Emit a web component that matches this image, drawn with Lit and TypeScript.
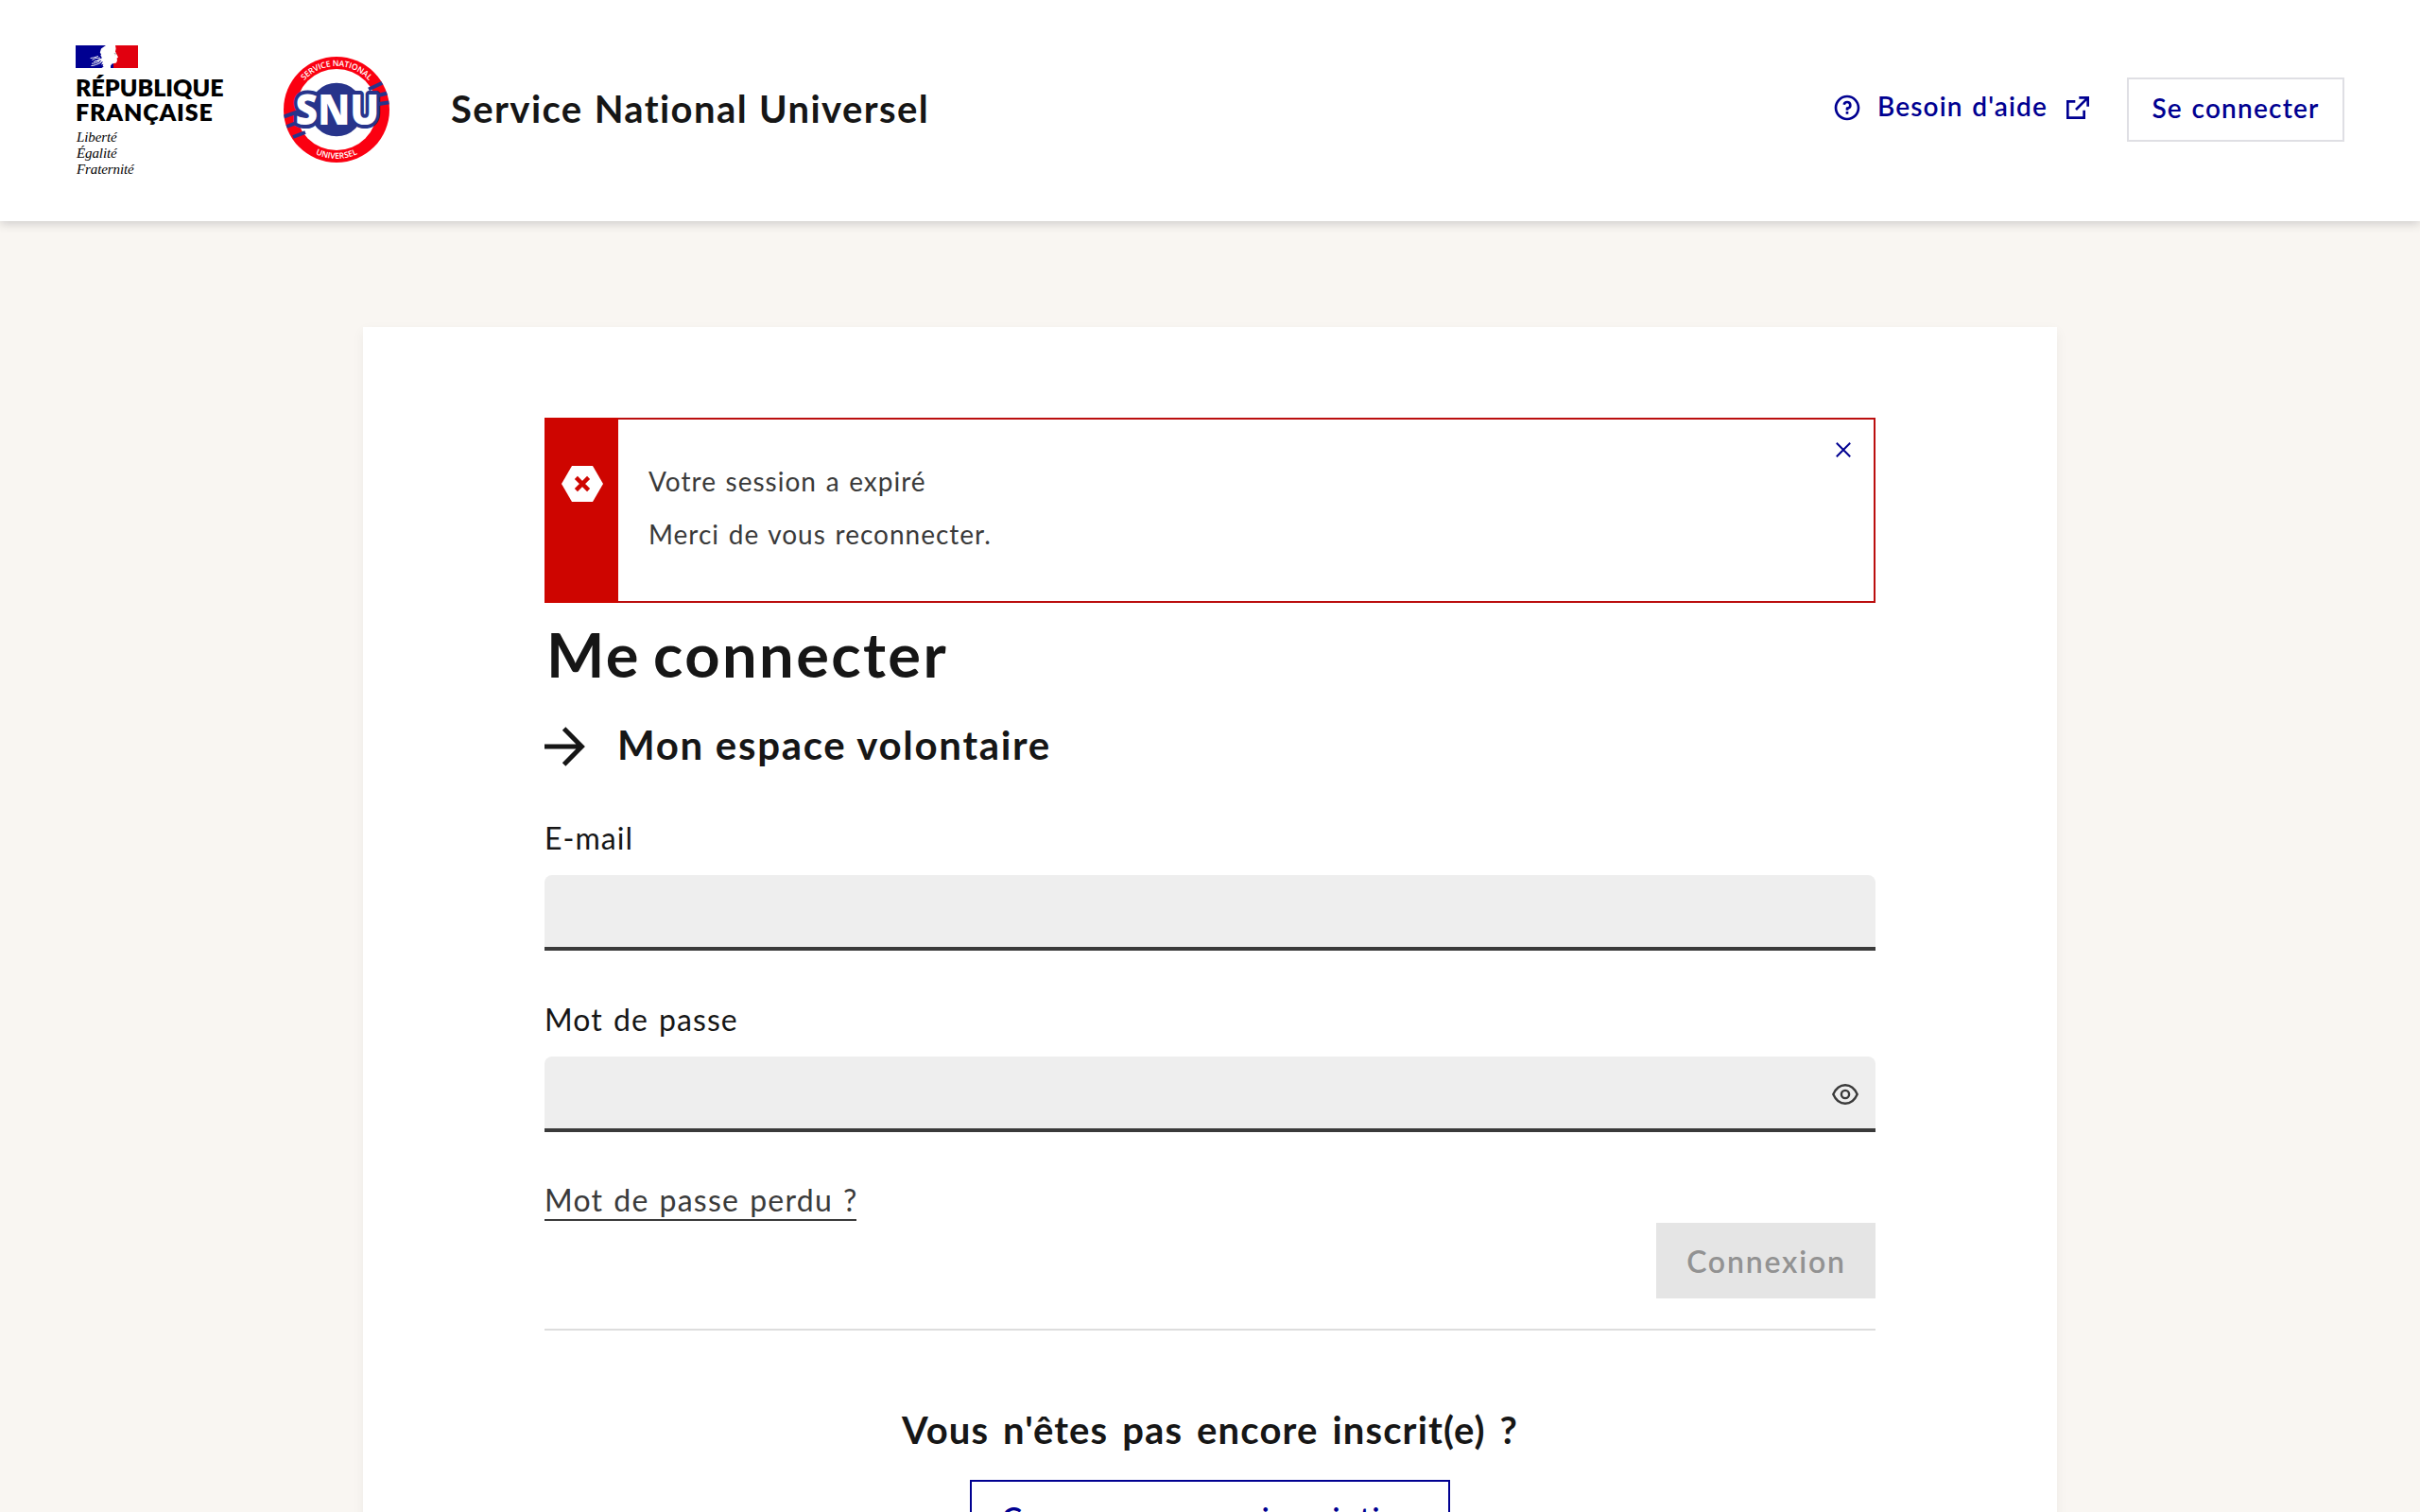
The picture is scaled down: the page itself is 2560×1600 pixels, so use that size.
import { LitElement, html, css } from "lit";
import { customElement, property } from "lit/decorators.js";

@customElement("rf-brand")
class RfBrand extends LitElement {
  static styles = css`
    :host { display: block; padding-top: 2px; width: 156px; }
    .flag { display: block; width: 66px; height: 24px; margin-bottom: 7px; }
    .name { font: 800 25px/26px Lato, "Liberation Sans", sans-serif; color: #000; white-space: nowrap; }
    .rep { letter-spacing: 0; }
    .fra { letter-spacing: 0.85px; }
    .motto { margin: 6px 0 0 1px; font: italic 400 15px/17px "Liberation Serif", serif; letter-spacing: -0.1px; color: #000; }
  `;
  render() {
    return html`
      <svg class="flag" viewBox="0 0 66 24">
        <rect width="40" height="24" fill="#000091" />
        <rect x="40" width="26" height="24" fill="#e1000f" />
        <path fill="#fff" d="M32 0H42L42.6 3.5L42 6.5L43.2 9L45 12.6L43.6 13.8L44 16L43 18.6L38.6 19.4L37 21.6V24H27.5C29.5 22.6 30.6 21 31 19.4L27 20.6L29 17L25 18.8L27.4 15.6L23.4 17L20 17.4L24.4 14.8L28 13.4L26.4 10.6L27 9.4L25.8 7.6L27 3.6Z" />
        <path fill="none" stroke="#fff" stroke-width="0.9" d="M15.6 13.6L19 13L24 11.4M17.4 15.6L21 13.6L26 13.2M17 19.2C20 19.2 23 18.4 25.4 17M16.4 21.6C20 21.4 23 20 26.6 18.4M19 17.6L22 16" />
        <path fill="#fff" d="M27 14L31 12V22H28.6L30 18Z" />
        <path fill="none" stroke="#7a7a7a" stroke-width="0.6" d="M40.8 8.4L42.6 8.6M41.4 9.8L42.6 9.6" />
      </svg>
      <div class="name rep">RÉPUBLIQUE</div>
      <div class="name fra">FRANÇAISE</div>
      <div class="motto">Liberté<br />Égalité<br />Fraternité</div>
    `;
  }
}

@customElement("snu-logo")
class SnuLogo extends LitElement {
  static styles = css`
    :host { display: block; width: 112px; height: 112px; }
    svg { display: block; }
    .ring { font: 600 8.6px "Open Sans", sans-serif; fill: #fff; }
    .snu { font: 800 45px "Open Sans", sans-serif; fill: #fff; stroke: #27348b; stroke-width: 8px; paint-order: stroke; stroke-linejoin: round; }
  `;
  render() {
    return html`
      <svg width="112" height="112" viewBox="0 0 112 112">
        <defs>
          <clipPath id="disc"><circle cx="56" cy="56" r="56" /></clipPath>
          <path id="top" d="M10 56A46 46 0 0 1 102 56" />
          <path id="bottom" d="M4 56A52 52 0 0 0 108 56" />
        </defs>
        <circle cx="56" cy="56" r="56" fill="#fb0011" />
        <circle cx="56" cy="56" r="43" fill="#fff" />
        <circle cx="56" cy="56" r="28.3" fill="#27348b" />
        <g clip-path="url(#disc)" fill="none" stroke="#27348b" stroke-width="4">
          <path d="M90 34.5L106 27M96 42L110 38.5M98 50.5L113 48M0 63.5L20 56.5M3 74L24 66M10 85L23 80" />
        </g>
        <text class="snu" x="12.6" y="71.6" textLength="88.5" lengthAdjust="spacingAndGlyphs">SNU</text>
        <text class="ring" text-anchor="middle" textLength="77"><textPath href="#top" startOffset="50%" textLength="77">SERVICE NATIONAL</textPath></text>
        <text class="ring" text-anchor="middle" textLength="46"><textPath href="#bottom" startOffset="50%" textLength="46">UNIVERSEL</textPath></text>
      </svg>
    `;
  }
}

@customElement("app-header")
class AppHeader extends LitElement {
  static styles = css`
    :host { display: block; }
    .bar { box-sizing: border-box; height: 234px; padding: 0 80px; background: #fff; display: flex; align-items: center; box-shadow: 0 3px 10px rgba(0, 0, 18, 0.17); font-family: Lato, "Liberation Sans", sans-serif; }
    .snu { margin: 0 0 2px 64px; }
    .title { margin: 0 0 4px 65px; font-size: 40px; line-height: 48px; font-weight: 700; letter-spacing: 1.4px; word-spacing: 1px; color: #161616; white-space: nowrap; }
    .actions { margin-left: auto; display: flex; align-items: center; color: #000091; font-size: 28px; line-height: 40px; font-weight: 600; white-space: nowrap; }
    .help { display: flex; align-items: center; margin: 0 36px 6px 0; }
    .label { margin: 0 0 5px 16px; width: 196px; letter-spacing: 1.15px; word-spacing: 1.5px; }
    .ico { display: block; width: 32px; height: 32px; fill: currentColor; }
    .login { box-sizing: border-box; width: 230px; height: 68px; margin-bottom: 2px; padding: 0 0 5px 0; border: 2px solid #dfdfe4; display: flex; align-items: center; justify-content: center; letter-spacing: 1.2px; word-spacing: 1.5px; }
  `;
  render() {
    return html`
      <header class="bar">
        <rf-brand></rf-brand>
        <snu-logo class="snu"></snu-logo>
        <div class="title">Service National Universel</div>
        <nav class="actions">
          <a class="help">
            <svg class="ico" viewBox="0 0 24 24"><path d="M12 22C6.477 22 2 17.523 2 12S6.477 2 12 2s10 4.477 10 10-4.477 10-10 10zm0-2a8 8 0 1 0 0-16 8 8 0 0 0 0 16zm-1-5h2v2h-2v-2zm2-1.645V14h-2v-1.5a1 1 0 0 1 1-1 1.5 1.5 0 1 0-1.471-1.794l-1.962-.393A3.5 3.5 0 1 1 13 13.355z" /></svg>
            <span class="label">Besoin d'aide</span>
            <svg class="ico" viewBox="0 0 24 24"><path d="M10 6v2H5v11h11v-5h2v7H3V6h7zm11-3v8h-2V6.413l-7.793 7.794-1.414-1.414L17.585 5H13V3h8z" /></svg>
          </a>
          <a class="login">Se connecter</a>
        </nav>
      </header>
    `;
  }
}

@customElement("app-alert")
class AppAlert extends LitElement {
  static styles = css`
    :host { display: block; }
    .box { box-sizing: border-box; height: 196px; display: flex; border: 2px solid #bb0f0f; background: #fff; }
    .strip { box-sizing: border-box; width: 78px; margin: -2px 0 -2px -2px; padding: 51px 0 0 18px; background: #ce0500; }
    .body { flex: 1; padding: 41px 0 0 32px; font-size: 28px; line-height: 48px; letter-spacing: 1px; word-spacing: 1.5px; color: #3a3a3a; }
    .body p { margin: 0 0 8px; }
    .close { display: block; width: 16px; height: 16px; margin: 24px 24px 0 0; }
    .cross { display: block; }
  `;
  render() {
    return html`
      <div class="box" role="alert">
        <div class="strip">
          <svg class="cross" width="44" height="38" viewBox="0 0 44 38">
            <path fill="#fff" d="M11 0H33L44 19L33 38H11L0 19Z" />
            <path fill="none" stroke="#ce0500" stroke-width="4.4" d="M15.4 12.4L28.6 25.6M28.6 12.4L15.4 25.6" />
          </svg>
        </div>
        <div class="body">
          <p>Votre session a expiré</p>
          <p>Merci de vous reconnecter.</p>
        </div>
        <svg class="close" viewBox="0 0 16 16"><path fill="none" stroke="#000091" stroke-width="2" d="M0.8 0.8L15.2 15.2M15.2 0.8L0.8 15.2" /></svg>
      </div>
    `;
  }
}

@customElement("app-field")
class AppField extends LitElement {
  static styles = css`
    :host { display: block; margin-top: 48px; }
    .label { display: block; padding-top: 1px; font-size: 32px; line-height: 48px; letter-spacing: 1.05px; word-spacing: 2px; color: #161616; margin-bottom: 15px; }
    .input { box-sizing: border-box; height: 80px; display: flex; align-items: center; justify-content: flex-end; padding-right: 18px; background: #eee; border-radius: 8px 8px 0 0; box-shadow: inset 0 -4px 0 #3a3a3a; }
  `;
  @property() label = "";
  @property({ type: Boolean }) secret = false;
  render() {
    return html`
      <label class="label">${this.label}</label>
      <div class="input">
        ${this.secret
          ? html`<svg width="28" height="22" viewBox="0 0 28 22" fill="none" stroke="#3a3a3a">
              <path stroke-width="2.4" stroke-linejoin="round" d="M1.3 11C4 4.8 8.6 1.2 14 1.2S24 4.8 26.7 11C24 17.2 19.4 20.8 14 20.8S4 17.2 1.3 11Z" />
              <circle cx="14" cy="11" r="4.1" stroke-width="2.4" />
            </svg>`
          : null}
      </div>
    `;
  }
}

@customElement("app-root")
class AppRoot extends LitElement {
  static styles = css`
    :host { display: block; }
    .page { height: 1600px; overflow: hidden; background: #f9f6f2; font-family: Lato, "Liberation Sans", sans-serif; }
    .card { box-sizing: border-box; width: 1792px; height: 1400px; margin: 112px auto 0; padding: 96px 192px 0; background: #fff; box-shadow: 0 4px 12px rgba(0, 0, 0, 0.05); display: flex; flex-direction: column; }
    .h1 { margin: 14px 0 0 2px; font-size: 65px; line-height: 80px; font-weight: 700; letter-spacing: 2.4px; word-spacing: -5px; color: #161616; }
    .space { display: flex; align-items: center; height: 48px; margin-top: 34px; color: #161616; }
    .space h2 { margin: 0 0 4px 33px; font-size: 42px; line-height: 48px; font-weight: 700; letter-spacing: 1.7px; }
    .lost { align-self: flex-start; box-sizing: border-box; width: 330px; margin-top: 50px; padding-top: 2px; border-bottom: 2px solid #3a3a3a; font-size: 32px; line-height: 40px; letter-spacing: 1.25px; word-spacing: 1.5px; color: #3a3a3a; white-space: nowrap; }
    .submit { align-self: flex-end; box-sizing: border-box; width: 232px; height: 80px; padding: 1px 0 0 1px; margin-top: 2px; background: #e5e5e5; color: #929292; font-size: 32px; line-height: 80px; font-weight: 600; letter-spacing: 1.82px; text-align: center; }
    .rule { height: 2px; margin-top: 32px; background: #ddd; flex: none; }
    .ask { margin: 75px 0 0; font-size: 40px; line-height: 60px; font-weight: 700; letter-spacing: 1.15px; word-spacing: 4px; text-align: center; color: #161616; }
    .signup { align-self: center; box-sizing: border-box; width: 508px; height: 80px; margin-top: 23px; border: 2px solid #000091; color: #000091; font-size: 32px; line-height: 78px; font-weight: 600; letter-spacing: 1.55px; word-spacing: 2px; text-align: center; white-space: nowrap; flex: none; }
  `;
  render() {
    return html`
      <div class="page">
        <app-header></app-header>
        <main class="card">
          <app-alert></app-alert>
          <h1 class="h1">Me connecter</h1>
          <div class="space">
            <svg width="44" height="44" viewBox="0 0 44 44" fill="none" stroke="#161616" stroke-width="5">
              <path d="M0 22H40M20.6 3L39.4 22L20.6 41" />
            </svg>
            <h2>Mon espace volontaire</h2>
          </div>
          <app-field label="E-mail"></app-field>
          <app-field label="Mot de passe" secret></app-field>
          <a class="lost">Mot de passe perdu ?</a>
          <div class="submit">Connexion</div>
          <div class="rule"></div>
          <div class="ask">Vous n'êtes pas encore inscrit(e) ?</div>
          <div class="signup">Commencer mon inscription</div>
        </main>
      </div>
    `;
  }
}
